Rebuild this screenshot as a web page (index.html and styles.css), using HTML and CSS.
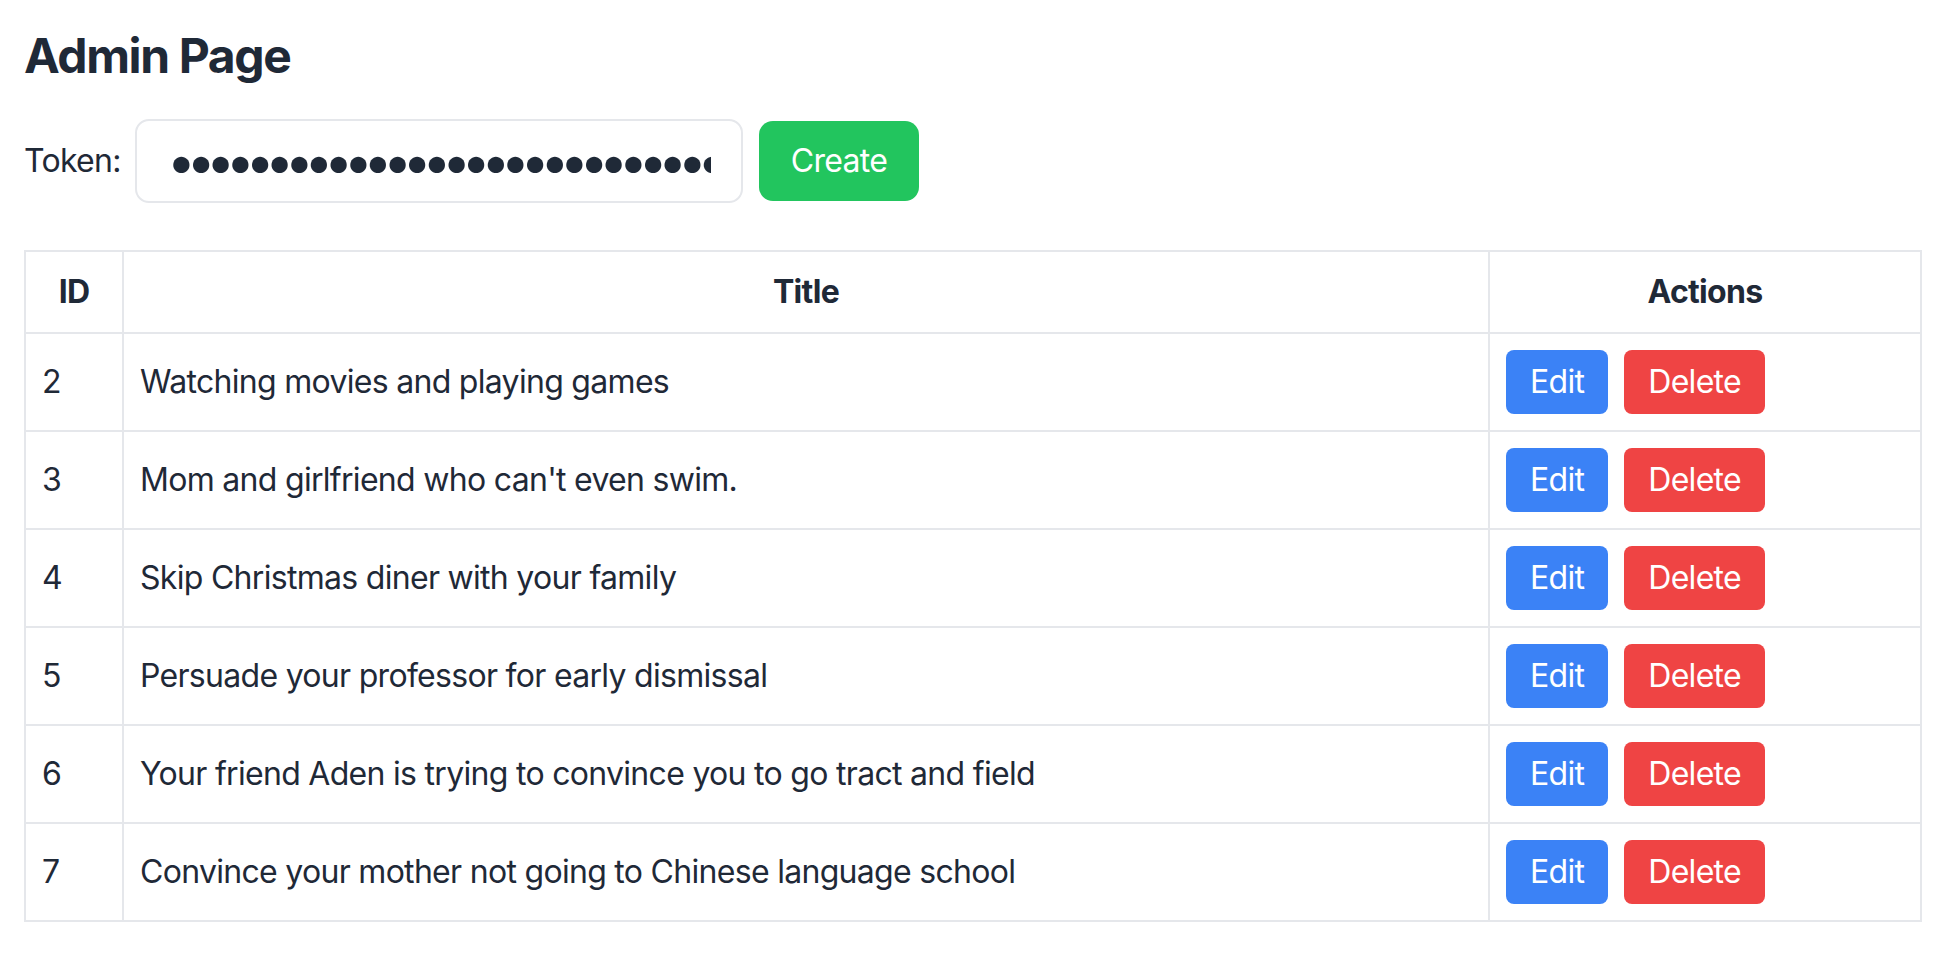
FILE: index.html
```html
<!DOCTYPE html>
<html lang="en">
<head>
<meta charset="utf-8">
<title>Admin Page</title>
<link rel="stylesheet" href="styles.css">
</head>
<body>
<div class="page">
  <h1 class="title">Admin Page</h1>
  <div class="token-row">
    <label class="token-label" for="token">Token:</label>
    <input class="token-input" id="token" type="password" value="abcdefghijklmnopqrstuvwxyz0123456789abcdefghij">
    <button class="btn btn-create">Create</button>
  </div>
  <table class="posts">
    <colgroup>
      <col class="col-id">
      <col class="col-title">
      <col class="col-actions">
    </colgroup>
    <thead>
      <tr><th>ID</th><th>Title</th><th>Actions</th></tr>
    </thead>
    <tbody>
      <tr><td>2</td><td>Watching movies and playing games</td><td class="actions"><button class="btn btn-edit">Edit</button><button class="btn btn-delete">Delete</button></td></tr>
      <tr><td>3</td><td>Mom and girlfriend who can't even swim.</td><td class="actions"><button class="btn btn-edit">Edit</button><button class="btn btn-delete">Delete</button></td></tr>
      <tr><td>4</td><td>Skip Christmas diner with your family</td><td class="actions"><button class="btn btn-edit">Edit</button><button class="btn btn-delete">Delete</button></td></tr>
      <tr><td>5</td><td>Persuade your professor for early dismissal</td><td class="actions"><button class="btn btn-edit">Edit</button><button class="btn btn-delete">Delete</button></td></tr>
      <tr><td>6</td><td>Your friend Aden is trying to convince you to go tract and field</td><td class="actions"><button class="btn btn-edit">Edit</button><button class="btn btn-delete">Delete</button></td></tr>
      <tr><td>7</td><td>Convince your mother not going to Chinese language school</td><td class="actions"><button class="btn btn-edit">Edit</button><button class="btn btn-delete">Delete</button></td></tr>
    </tbody>
  </table>
</div>
</body>
</html>
```

FILE: styles.css
```css
* { box-sizing: border-box; }

html, body {
  margin: 0;
  padding: 0;
  background: #ffffff;
}

body {
  font-family: Inter, "Noto Sans", "Liberation Sans", sans-serif;
  color: #1f2937;
  font-size: 32px;
  line-height: 48px;
  letter-spacing: -0.7px;
}

.page {
  padding: 24px;
}

.title {
  margin: 0 0 31px 0;
  font-size: 48px;
  line-height: 64px;
  font-weight: 700;
  letter-spacing: -1.4px;
}

.token-row {
  display: flex;
  align-items: center;
  margin-bottom: 47px;
}

.token-label {
  font-size: 32px;
  line-height: 48px;
  margin-right: 14px;
}

.token-input {
  width: 608px;
  height: 84px;
  border: 2px solid #e5e7eb;
  border-radius: 14px;
  padding: 0 30px;
  font-family: Inter, "Noto Sans", sans-serif;
  font-size: 52px;
  letter-spacing: -9.6px;
  color: #1f2937;
  outline: none;
  background: #ffffff;
}

.btn {
  border: 0;
  color: #ffffff;
  font-family: inherit;
  font-size: 32px;
  line-height: 48px;
  letter-spacing: -0.7px;
  cursor: pointer;
}

.btn-create {
  margin-left: 16px;
  height: 80px;
  padding: 0 32px;
  border-radius: 14px;
  background: #22c55e;
}

.posts {
  width: 100%;
  border-collapse: collapse;
  table-layout: fixed;
  border: 2px solid #e5e7eb;
}

.col-id { width: 98px; }
.col-actions { width: 432px; }

.posts th,
.posts td {
  border: 2px solid #e5e7eb;
  padding: 16px;
  vertical-align: middle;
}

.posts th {
  font-weight: 700;
  text-align: center;
}

.posts td {
  text-align: left;
  white-space: nowrap;
}

.actions {
  font-size: 0;
}

.btn-edit,
.btn-delete {
  padding: 8px 24px;
  border-radius: 8px;
  height: 64px;
  vertical-align: middle;
}

.btn-edit {
  background: #3b82f6;
  margin-right: 16px;
}

.btn-delete {
  background: #ef4444;
}
```
